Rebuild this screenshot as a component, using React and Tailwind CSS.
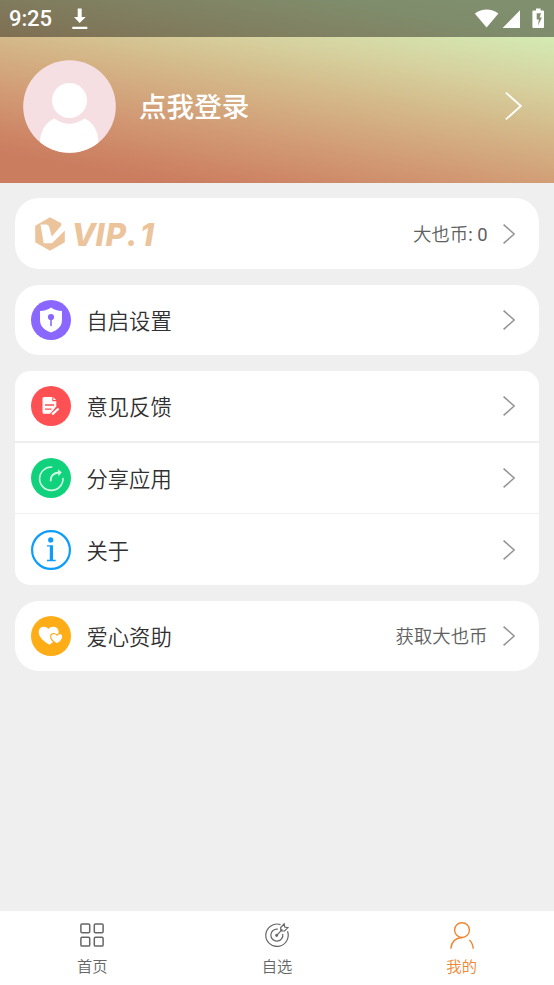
import React from 'react';

const Chevron = ({ className, strokeWidth = 1.6 }) => (
  <svg className={className} viewBox="0 0 12 20" fill="none" stroke="currentColor" strokeWidth={strokeWidth}>
    <path d="M0.6 0.6 L11.2 10 L0.6 19.4" />
  </svg>
);

const StatusBar = () => (
  <div className="flex h-[37px] items-center justify-between bg-black/40 text-white">
    <div className="flex items-center pl-[9px]">
      <span className="w-[63px] pt-px font-['Roboto',sans-serif] text-[22px] font-medium leading-[36px] tracking-[-0.1px]">9:25</span>
      <svg className="h-[22px] w-[16px]" viewBox="0 0 16 22" fill="currentColor">
        <path d="M5.7 0.5h4v8.4h4L7.7 15 2 8.9h3.7zM0.3 18.8h15v2.2h-15z" />
      </svg>
    </div>
    <svg className="mr-[8px] h-[22px] w-[72px]" viewBox="0 0 72 22" fill="currentColor">
      <path d="M0.8 5.6C8 0.1 17.4 0.1 24.4 5.6L12.6 19.4z" />
      <path d="M28.6 20L46 2.2V20z" />
      <path fillRule="evenodd" d="M62 0.4h4.6v2H69q1 0 1 1v15.7q0 1-1 1h-9.6q-1 0-1-1v-15.7q0-1 1-1H62zM62.7 5.3v6.2h2.2l-1 6.3 4-8.3h-2.2l1.3-4.2z" />
    </svg>
  </div>
);

const Avatar = () => (
  <svg className="h-[93px] w-[93px]" viewBox="0 0 93 93">
    <defs>
      <clipPath id="avatar-clip">
        <circle cx="46.5" cy="46.5" r="46.3" />
      </clipPath>
    </defs>
    <g clipPath="url(#avatar-clip)">
      <rect width="93" height="93" fill="#f6dfe3" />
      <circle cx="46.5" cy="40.5" r="17.5" fill="#fff" />
      <path d="M17 95V83C17 71 23 62 31.5 58.5Q46 69 61.5 58.5C70 62 75.5 71 75.5 83V95z" fill="#fff" />
    </g>
  </svg>
);

const VipBadge = () => (
  <svg className="h-[34px] w-[30px]" viewBox="0 0 30 34">
    <path d="M15 0.3L26.3 6.3V8.5L16.8 19.5L14 9.5Q13.3 7.5 11.5 7.5H5.5L8.7 26.3H17L29.8 13.5V25.3L15 33.7L0.2 25.3V8.7z" fill="#ecc49c" />
  </svg>
);

const ShieldIcon = () => (
  <svg className="h-10 w-10" viewBox="0 0 40 40">
    <circle cx="20" cy="20" r="20" fill="#8a67ff" />
    <path d="M20 7.5Q24.5 10.7 31 11V20C31 26.5 26.5 30.3 20 32.5C13.5 30.3 9 26.5 9 20V11Q15.5 10.7 20 7.5z" fill="#fff" />
    <circle cx="20" cy="17" r="3.1" fill="#8a67ff" />
    <path d="M20 18v7.4" stroke="#8a67ff" strokeWidth="1.6" strokeLinecap="round" />
  </svg>
);

const FeedbackIcon = () => (
  <svg className="h-10 w-10" viewBox="0 0 40 40">
    <circle cx="20" cy="20" r="20" fill="#ff5053" />
    <path d="M13 11h8.3v4.2h4V20.5L19 27.8H13q-1.5 0-1.5-1.5v-13.8q0-1.5 1.5-1.5z" fill="#fff" />
    <path d="M22.4 11.2L25 14h-2.6z" fill="#fff" />
    <path d="M14 19h9M14 23.2h6.5" stroke="#ff5053" strokeWidth="1.3" />
    <path d="M21.2 28.4L27.6 22.5" stroke="#fff" strokeWidth="2.3" />
  </svg>
);

const ShareIcon = () => (
  <svg className="h-10 w-10" viewBox="0 0 40 40" fill="none">
    <circle cx="20" cy="20" r="20" fill="#11d27c" />
    <g stroke="#d2f7e4" strokeWidth="1.6" strokeLinecap="round">
      <path d="M20.7 9A11.7 11.7 0 1 0 32 20.5" />
      <path d="M19.7 22.5C19.7 17.5 22.5 15 28 14.5" strokeWidth="1.9" />
    </g>
    <path d="M26.8 11.2L30.8 14.3L27.5 18.2z" fill="#d2f7e4" />
  </svg>
);

const InfoIcon = () => (
  <svg className="h-10 w-10" viewBox="0 0 40 40" fill="#0c9dfb">
    <circle cx="20" cy="20" r="18.9" fill="none" stroke="#0c9dfb" strokeWidth="2.2" />
    <circle cx="19.7" cy="9.9" r="2.6" />
    <path d="M16 15.2H22V29.8H24.7V31.2H16V29.8H18.8V16.6H16z" />
  </svg>
);

const HeartsIcon = () => (
  <svg className="h-10 w-10" viewBox="0 0 40 40">
    <circle cx="20" cy="20" r="20" fill="#ffad17" />
    <path d="M18.5 28.8C13 25.5 7.7 21 7.7 15.9C7.7 10.4 14.6 8.8 17.3 13.1C20.5 8.8 27.6 10.4 27.6 15.9C27.6 21 23 25.5 18.5 28.8z" fill="#fff" />
    <path d="M26.2 28.1C22 25.6 19.6 23.5 19.6 20.7C19.6 17.2 23.8 16.4 26 19.2C28.3 16.4 32.3 17.5 31.8 21C31.5 23.5 29 26 26.2 28.1z" fill="#fff" stroke="#ffad17" strokeWidth="1.2" />
  </svg>
);

const GridIcon = () => (
  <svg className="h-6 w-6" viewBox="0 0 24 24" fill="none" stroke="currentColor" strokeWidth="1.5">
    <rect x="0.9" y="0.9" width="8.8" height="8.8" rx="1.2" />
    <rect x="14.3" y="0.9" width="8.8" height="8.8" rx="1.2" />
    <rect x="0.9" y="14.3" width="8.8" height="8.8" rx="1.2" />
    <rect x="14.3" y="14.3" width="8.8" height="8.8" rx="1.2" />
  </svg>
);

const TargetIcon = () => (
  <svg className="h-6 w-6" viewBox="0 0 24 24" fill="none" stroke="currentColor" strokeWidth="1.2">
    <path d="M15.5 1.6A11.2 11.2 0 1 0 22.5 8.3" />
    <path d="M12.8 6.2A6 6 0 1 0 17.7 10.8" />
    <path d="M11 13.2L17.3 6.3M15.8 7.8L15.7 4.5L19.2 0.8L19.7 4L23 4.6L19.5 8z" />
    <circle cx="11.7" cy="12.3" r="0.9" fill="currentColor" />
  </svg>
);

const PersonIcon = () => (
  <svg className="h-[27px] w-6" viewBox="0 0 24 27" fill="none" stroke="currentColor" strokeWidth="1.4">
    <circle cx="12" cy="8.1" r="7.4" />
    <path d="M0.8 26.7C1.3 20.3 5 16 12 15.5M19.3 18C21.7 20 23 23 23.2 26.7" />
  </svg>
);

const Row = ({ icon, label, value }) => (
  <div className="flex h-[70.6px] items-center pl-4 pr-6">
    {icon}
    <span className="ml-[15.5px] flex-1 pt-px text-[21.3px] font-[350] leading-[30px] text-[#303030]">{label}</span>
    {value && <span className="mr-[15.5px] text-[18.4px] font-[350] text-[#606060]">{value}</span>}
    <Chevron className="h-5 w-3 text-[#949494]" />
  </div>
);

const Divider = () => <div className="h-[1.3px] bg-[#efefef]" />;

const tabs = [
  { label: '首页', icon: <GridIcon /> },
  { label: '自选', icon: <TargetIcon /> },
  { label: '我的', icon: <PersonIcon />, active: true },
];

const App = () => {
  return (
    <div className="flex h-[985px] w-[554px] flex-col overflow-hidden bg-[#efefef] font-['Noto_Sans_CJK_SC',sans-serif]">
      {/* Header */}
      <header className="h-[183px] bg-[linear-gradient(190deg,#d5f0b9_0%,#d4ebb4_13%,#d6d3a0_31%,#d4b788_49%,#d29d76_66%,#cd8465_83%,#cb7d60_89%,#cb7d60_100%)]">
        <StatusBar />
        <div className="flex h-[138px] items-center pl-[22.6px] pr-8">
          <Avatar />
          <span className="ml-[23.4px] flex-1 pb-[3px] text-[27.6px] font-medium leading-[40px] text-white">点我登录</span>
          <Chevron className="h-[30px] w-[17px] text-white" strokeWidth={1.3} />
        </div>
      </header>

      <main className="flex flex-1 flex-col gap-[15.5px] px-[15px] pt-[15.4px]">
        {/* VIP */}
        <div className="flex h-[70.7px] items-center rounded-[24px] bg-white pl-5 pr-6">
          <VipBadge />
          <svg className="ml-[10px] h-[30px] w-[84px] overflow-visible" viewBox="0 0 84 30" fill="#ecc49c">
            <text x="-3.5 20.5 30.5 51.5 65" y="26.5" className="font-['Inter',sans-serif] text-[31.5px] font-extrabold italic">VIP.1</text>
          </svg>
          <span className="ml-auto mr-[15.5px] pt-[2px] text-[18.4px] font-[350] text-[#606060]">大也币: <span className="font-['Roboto',sans-serif] font-normal">0</span></span>
          <Chevron className="h-5 w-3 text-[#949494]" />
        </div>

        <div className="rounded-[24px] bg-white">
          <Row icon={<ShieldIcon />} label="自启设置" />
        </div>

        <div className="rounded-[15px] bg-white">
          <Row icon={<FeedbackIcon />} label="意见反馈" />
          <Divider />
          <Row icon={<ShareIcon />} label="分享应用" />
          <Divider />
          <Row icon={<InfoIcon />} label="关于" />
        </div>

        <div className="rounded-[24px] bg-white">
          <Row icon={<HeartsIcon />} label="爱心资助" value="获取大也币" />
        </div>
      </main>

      {/* Bottom tabs */}
      <nav className="grid h-[74.5px] grid-cols-3 bg-white">
        {tabs.map((tab) => (
          <div key={tab.label} className={`flex flex-col items-center ${tab.active ? 'text-[#ee8733]' : 'text-[#666]'}`}>
            <div className="flex h-[43px] items-center pt-[6px]">{tab.icon}</div>
            <span className="text-[15.3px] font-[350] leading-[23px]">{tab.label}</span>
          </div>
        ))}
      </nav>
    </div>
  );
};

export default App;
